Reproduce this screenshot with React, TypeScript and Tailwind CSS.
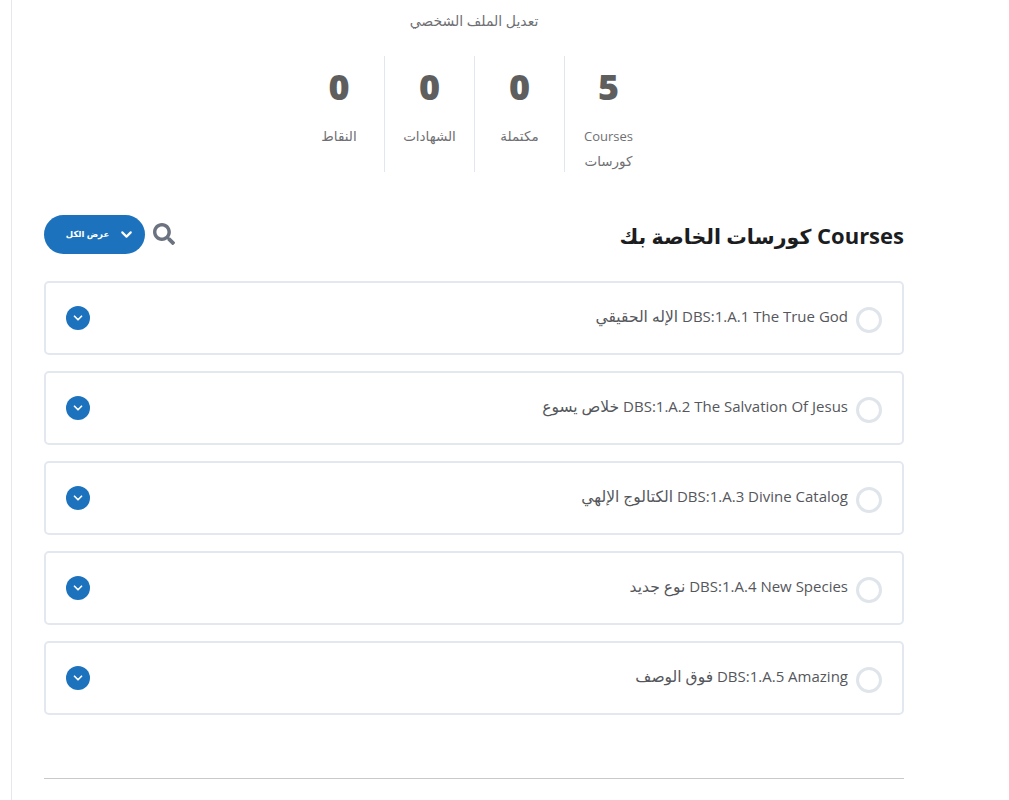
import React from 'react'
import { ChevronDown } from 'lucide-react'
import { FaSearch } from 'react-icons/fa'

const stats = [
  { value: '5', latin: 'Courses', label: 'كورسات' },
  { value: '0', label: 'مكتملة' },
  { value: '0', label: 'الشهادات' },
  { value: '0', label: 'النقاط' },
]

const courses = [
  { code: 'DBS:1.A.1 The True God', ar: 'الإله الحقيقي' },
  { code: 'DBS:1.A.2 The Salvation Of Jesus', ar: 'خلاص يسوع' },
  { code: 'DBS:1.A.3 Divine Catalog', ar: 'الكتالوج الإلهي' },
  { code: 'DBS:1.A.4 New Species', ar: 'نوع جديد' },
  { code: 'DBS:1.A.5 Amazing', ar: 'فوق الوصف' },
]

export default function App() {
  return (
    <div dir="rtl" className="h-[800px] overflow-hidden bg-white font-['Open_Sans','Noto_Sans','DejaVu_Sans',sans-serif]">
      <div className="ml-[11px] mr-[105px] h-full border-l border-[#e6e7ea] pl-[32px]" dir="ltr">
        <div dir="rtl" className="w-[860px]">
          <p className="pt-[11px] text-center text-[14px] leading-[20px] text-[#6f7074]">تعديل الملف الشخصي</p>

          <div className="mt-[25px] flex justify-center">
            {stats.map((s, i) => (
              <div key={i} className={`h-[116px] w-[90px] text-center ${i < 3 ? 'border-l border-[#e2e7ef]' : ''} ${i === 0 ? 'pr-[2px]' : ''}`}>
                <div className="pt-[8px] text-[36px] font-extrabold leading-[46px] text-[#5e5e5e]">{s.value}</div>
                <div className="mx-auto mt-[14px] w-[70px] text-[13.5px] leading-[25px] text-[#6f7074]">
                  {s.latin && <span className="text-[13px]">{s.latin} </span>}
                  {s.label}
                </div>
              </div>
            ))}
          </div>

          <div className="mt-[43px] flex h-[40px] items-center justify-between">
            <h2 className="text-[22px] font-bold leading-[40px] text-[#1c1d1f]">
              Courses <span className="text-[20.5px]">كورسات الخاصة بك</span>
            </h2>
            <div className="mb-[1px] flex items-center gap-[8px]">
              <FaSearch size={22} className="mb-[2px] text-[#6b7280]" />
              <button className="flex h-[39px] w-[101px] items-center justify-center gap-[9px] rounded-full bg-[#1d72bd] pl-[12px] text-[8.5px] font-bold text-white">
                <ChevronDown size={17} strokeWidth={3} />
                <span>عرض الكل</span>
              </button>
            </div>
          </div>

          <div className="mt-[26px] flex flex-col gap-[16px]">
            {courses.map((c) => (
              <div key={c.code} className="flex h-[74px] items-center justify-between rounded-[5px] border-2 border-[#e3e8f0] pl-[20px] pr-[20px]">
                <div className="flex items-center gap-[8px]">
                  <span className="mt-[4px] size-[26px] shrink-0 rounded-full border-[3px] border-[#e0e5ec]" />
                  <span className="mb-[4px] text-[15px] leading-[24px] text-[#55575c]">
                    {c.code} <span className="text-[15.5px]">{c.ar}</span>
                  </span>
                </div>
                <span className="mb-[1px] flex size-[24px] items-center justify-center rounded-full bg-[#1d72bd] text-white">
                  <ChevronDown size={14} strokeWidth={3} />
                </span>
              </div>
            ))}
          </div>

          <hr className="mt-[63px] border-t border-[#c9c9c9]" />
        </div>
      </div>
    </div>
  )
}
